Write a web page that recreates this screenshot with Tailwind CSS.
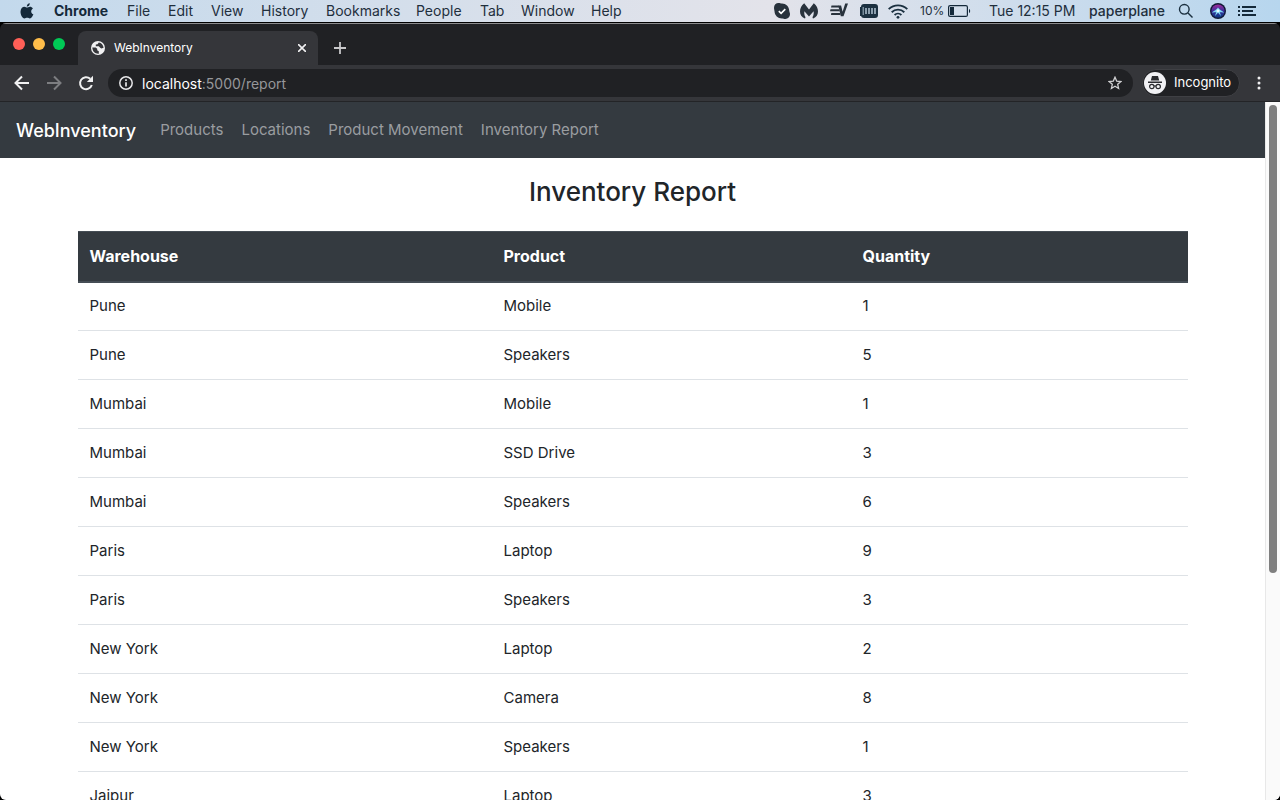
<!DOCTYPE html>
<html lang="en">
<head>
<meta charset="utf-8">
<title>WebInventory</title>
<script src="https://cdn.jsdelivr.net/npm/@tailwindcss/browser@4"></script>
</head>
<body class="h-screen flex flex-col overflow-hidden bg-black font-['Inter','Liberation_Sans',sans-serif] text-[#212529]">

<!-- System menu bar -->
<header class="h-[22px] shrink-0 flex items-center justify-between bg-linear-to-r from-[#c3d9ec] via-[#e3e3ea] via-60% to-[#b7d6ee] text-[14px] leading-[22px] text-[#1f2f3d] whitespace-nowrap">
  <nav class="flex items-center pl-5" aria-label="Menu bar">
    <button class="w-[34px]" aria-label="Apple menu">
      <svg class="w-[14px] h-4" viewBox="0 0 14 16" fill="#14293a"><path d="M9.800 0.300c.1 1.800-1.300 3.400-3 3.400C6.600 2 8.200.4 9.800.3zM7 4.600c.6 0 1.600-.8 3-.8 1.100 0 2.200.6 2.900 1.600-2.500 1.500-2.100 4.900.5 5.900-.6 1.700-2 4.200-3.500 4.200-1.100 0-1.400-.7-2.700-.7s-1.700.7-2.700.7C2.700 15.500.5 12.300.5 8.800c0-3.100 1.900-5 4-5 1.200 0 1.900.8 2.500.8z"/></svg>
    </button>
    <button class="w-[73px] text-left font-bold text-[#14293a]">Chrome</button>
    <button class="w-[41px] text-left">File</button>
    <button class="w-[43px] text-left">Edit</button>
    <button class="w-[50px] text-left">View</button>
    <button class="w-[65px] text-left">History</button>
    <button class="w-[90px] text-left">Bookmarks</button>
    <button class="w-[64px] text-left">People</button>
    <button class="w-[41px] text-left">Tab</button>
    <button class="w-[70px] text-left">Window</button>
    <button class="text-left">Help</button>
  </nav>
  <div class="flex items-center pr-6">
    <svg class="w-4 h-4 mr-[10px]" viewBox="0 0 16 16"><path fill="#28323c" d="M4.500 0C6 0 6.500.5 8 .5c4 0 7 3 7.200 7 0 1.200.8 2 .8 3.600 0 2.700-2 4.900-4.600 4.900-1.400 0-2-.6-3.400-.6-4.200 0-7.300-3-7.500-7.200C.4 7 0 6.200 0 4.700 0 2 2 0 4.500 0z"/><path d="M4.800 8.200l2.300 2.200 4.200-4.300" fill="none" stroke="#fff" stroke-width="1.600"/></svg>
    <svg class="w-[18px] h-4 mr-[12px]" viewBox="0 0 18 16"><path fill="#28323c" d="M4.200 0.300L9 6.600 13.800.3C16.600 2.400 18 5.400 18 8.600c0 3.400-1.600 5.700-4.800 7-.6-.4-.8-1-.5-1.800 1-2 1.200-3.800.9-5.600L9 13.600 4.400 8.200c-.3 1.800-.1 3.600.9 5.600.3.800.1 1.400-.5 1.800C1.600 14.300 0 12 0 8.600 0 5.400 1.400 2.400 4.200.3z"/></svg>
    <svg class="w-[18px] h-4 mr-[12px]" viewBox="0 0 18 16" fill="#28323c"><path d="M1.500 2.500h7.200l.5 2H1zM.5 6.200h8.800l.5 2H0zM1.300 10h8.600l.6 2H1z"/><path d="M8.200 2.500h2.900l1.500 6.300L15.200.5H18L13.500 13.200h-2.700z"/></svg>
    <svg class="w-[18px] h-[14px] mr-[10px]" viewBox="0 0 18 14"><rect x="1" y="0" width="17" height="14" rx="3" fill="#1b3040"/><rect x="0" y="3" width="2" height="9" fill="#1b3040"/><path d="M3.200 3v8" stroke="#c8dbe9" stroke-width=".8"/><path d="M6 4v6M9 4v6M12 4v6M15 4v6" stroke="#c8dbe9" stroke-width="1.300"/></svg>
    <svg class="w-5 h-[15px] mr-[12px]" viewBox="0 0 20 15" fill="none" stroke="#1b3040" stroke-width="1.900"><path d="M.7 5.200a13.200 13.200 0 0 1 18.600 0M3.700 8.200a9 9 0 0 1 12.600 0M6.600 11a4.900 4.900 0 0 1 6.800 0"/><circle cx="10" cy="13.300" r="1.400" fill="#1b3040" stroke="none"/></svg>
    <span class="text-[12px] w-7">10%</span>
    <svg class="w-[23px] h-3 mr-[18px]" viewBox="0 0 23 12"><rect x=".6" y=".6" width="18.800" height="10.800" rx="1.500" fill="none" stroke="#14293a" stroke-width="1.200"/><rect x="2" y="2" width="4" height="8" fill="#14293a"/><path d="M21 4c1.500.3 1.500 3.700 0 4z" fill="#14293a"/></svg>
    <span class="w-[100px]">Tue 12:15 PM</span>
    <span class="w-[89px] font-medium">paperplane</span>
    <svg class="w-4 h-4 mr-[16px]" viewBox="0 0 16 16" fill="none" stroke="#1b3040" stroke-width="1.400"><circle cx="6.300" cy="6.300" r="4.800"/><path d="M10 10l4.500 4.500"/></svg>
    <svg class="w-4 h-4 mr-[12px]" viewBox="0 0 16 16"><defs><linearGradient id="siri" x2="0" y2="1"><stop offset="0" stop-color="#a02c9c"/><stop offset=".5" stop-color="#3a2f9c"/><stop offset="1" stop-color="#0b3a86"/></linearGradient></defs><circle cx="8" cy="8" r="8" fill="#111936"/><circle cx="8" cy="8" r="6.600" fill="url(#siri)"/><path d="M8 4.500C9.500 6.500 12 8 14 9.500c-2 0-3-.3-4.200-.2L11 13 8 9.800 5 13l1.200-3.700C5 9.200 4 9.500 2 9.500 4 8 6.500 6.500 8 4.500z" fill="#7fd8f2"/><circle cx="8" cy="7.800" r="1.500" fill="#eafcff"/></svg>
    <svg class="w-[18px] h-3" viewBox="0 0 18 12" stroke="#14293a" stroke-width="1.800"><path d="M0 2h2M4 2h14M0 6h2M4 6h11M0 10h2M4 10h14"/></svg>
  </div>
</header>

<!-- Browser window -->
<div class="flex-1 min-h-0 mt-px flex flex-col rounded-[6px] overflow-hidden bg-[#202124] text-white">
  <div class="h-[42px] shrink-0 flex items-end border-t border-[#8b8b8d]">
    <div class="flex gap-2 pl-[13px] pb-[2px] w-[78px] self-center" aria-label="Window controls">
      <button class="size-3 rounded-full bg-[#ff5f57]" aria-label="Close window"></button>
      <button class="size-3 rounded-full bg-[#ffbd4a]" aria-label="Minimise window"></button>
      <button class="size-3 rounded-full bg-[#00ca56]" aria-label="Zoom window"></button>
    </div>
    <div class="w-[240px] h-[34px] rounded-t-lg bg-[#35363a] flex items-center px-3 text-[12px]">
      <svg class="w-[14px] h-[14px] ml-px mr-[9px]" viewBox="0 0 14 14"><circle cx="7" cy="7" r="7" fill="#f1f1f2"/><path d="M1.300 6.500l3.400 0 1.500 1.200v1.600l1.600 1v2.400C4 13 1.500 10.500 1.300 6.500zM7.800 1.400L6.500 3.200 4.800 3.600v1.600h3l1.400 1.500 1.200.8 2.200-.7C12.300 4 10.500 1.800 7.800 1.400z" fill="#35363a"/></svg>
      <span class="flex-1">WebInventory</span>
      <button aria-label="Close tab"><svg class="size-2" viewBox="0 0 8 8" stroke="#f1f1f2" stroke-width="1.600"><path d="M0 0l8 8M8 0L0 8"/></svg></button>
    </div>
    <button class="w-11 h-[34px] flex items-center justify-center" aria-label="New tab"><svg class="size-3" viewBox="0 0 12 12" stroke="#c8c8ca" stroke-width="1.800"><path d="M6 0v12M0 6h12"/></svg></button>
  </div>

  <div class="h-9 shrink-0 bg-[#35363a] flex items-center pl-[14px] pr-[18px]">
    <button class="w-8" aria-label="Back"><svg class="size-4" viewBox="0 0 16 16" fill="none" stroke="#f1f1f2" stroke-width="2"><path d="M15 8H2M8 1.500L1.500 8 8 14.500"/></svg></button>
    <button class="w-8" aria-label="Forward"><svg class="size-4" viewBox="0 0 16 16" fill="none" stroke="#7d7e81" stroke-width="2"><path d="M1 8h13M8 1.500L14.500 8 8 14.500"/></svg></button>
    <button class="w-[30px]" aria-label="Reload"><svg class="size-4" viewBox="0 0 16 16"><path d="M13.800 10A6 6 0 1 1 12.200 3.800" fill="none" stroke="#f1f1f2" stroke-width="2"/><path d="M15 .8V7H8.800z" fill="#f1f1f2"/></svg></button>
    <div class="flex-1 h-7 rounded-full bg-[#202124] flex items-center px-[11px] text-[14px]">
      <svg class="size-[14px] mr-[9px]" viewBox="0 0 14 14"><circle cx="7" cy="7" r="6.200" fill="none" stroke="#e8e8ea" stroke-width="1.500"/><path d="M7 6.200v4.300M7 3.200v1.700" stroke="#e8e8ea" stroke-width="1.700"/></svg>
      <div class="flex-1 outline-none" role="textbox" contenteditable="true" spellcheck="false" aria-label="Address">localhost<span class="text-[#96979a]">:5000/report</span></div>
      <button aria-label="Bookmark this page"><svg class="size-[14px] block" viewBox="0 0 14 14" fill="none" stroke="#d0d0d2" stroke-width="1.300"><path d="M7 1.200l1.700 3.900 4.200.4-3.200 2.800.9 4.200L7 10.300l-3.600 2.200.9-4.200L1.100 5.500l4.200-.4z"/></svg></button>
    </div>
    <button class="ml-[9px] h-7 w-[98px] rounded-full bg-[#202124] border border-[#3f4044] flex items-center text-[13px]">
      <svg class="size-[22px] ml-px mr-2" viewBox="0 0 22 22"><circle cx="11" cy="11" r="11" fill="#f1f1f4"/><path d="M8 4h6l1.200 4.500H6.800zM4 9.600h14v1.300H4z" fill="#2a2b2f"/><g fill="none" stroke="#2a2b2f" stroke-width="1.200"><circle cx="7.800" cy="14.500" r="2.200"/><circle cx="14.200" cy="14.500" r="2.200"/><path d="M10 14.300q1-.8 2 0"/></g></svg>
      <span>Incognito</span>
    </button>
    <button class="ml-[16px]" aria-label="Browser menu"><svg class="w-[6px] h-[14px] block" viewBox="0 0 6 14" fill="#f1f1f2"><circle cx="3" cy="2" r="1.500"/><circle cx="3" cy="7" r="1.500"/><circle cx="3" cy="12" r="1.500"/></svg></button>
  </div>

  <div class="flex-1 min-h-0 border-t border-[#232427] bg-white flex">
    <div class="flex-1 min-w-0 overflow-hidden">
      <nav class="h-14 bg-[#343a40] flex items-center px-4 text-[15px]">
        <a href="#" class="text-[18px] font-medium text-white mr-6">WebInventory</a>
        <div class="flex gap-[18px] text-[#9a9da0]">
          <a href="#">Products</a>
          <a href="#">Locations</a>
          <a href="#">Product Movement</a>
          <a href="#">Inventory Report</a>
        </div>
      </nav>
      <main class="max-w-[1110px] mx-auto text-[#212529]">
        <h1 class="pt-[18px] pb-[23px] text-center text-[26px] leading-8 font-medium">Inventory Report</h1>
        <table class="w-full table-fixed text-left text-[15px] leading-6">
          <colgroup><col class="w-[414px]"><col class="w-[359px]"><col></colgroup>
          <thead class="bg-[#343a40] text-white text-[16px]">
            <tr class="h-[50px] border-t border-b-2 border-[#454d55]"><th class="px-3 font-bold">Warehouse</th><th class="px-3 font-bold">Product</th><th class="px-3 font-bold">Quantity</th></tr>
          </thead>
          <tbody class="divide-y divide-[#dee2e6]">
            <tr class="h-[49px]"><td class="px-3">Pune</td><td class="px-3">Mobile</td><td class="px-3">1</td></tr>
            <tr class="h-[49px]"><td class="px-3">Pune</td><td class="px-3">Speakers</td><td class="px-3">5</td></tr>
            <tr class="h-[49px]"><td class="px-3">Mumbai</td><td class="px-3">Mobile</td><td class="px-3">1</td></tr>
            <tr class="h-[49px]"><td class="px-3">Mumbai</td><td class="px-3">SSD Drive</td><td class="px-3">3</td></tr>
            <tr class="h-[49px]"><td class="px-3">Mumbai</td><td class="px-3">Speakers</td><td class="px-3">6</td></tr>
            <tr class="h-[49px]"><td class="px-3">Paris</td><td class="px-3">Laptop</td><td class="px-3">9</td></tr>
            <tr class="h-[49px]"><td class="px-3">Paris</td><td class="px-3">Speakers</td><td class="px-3">3</td></tr>
            <tr class="h-[49px]"><td class="px-3">New York</td><td class="px-3">Laptop</td><td class="px-3">2</td></tr>
            <tr class="h-[49px]"><td class="px-3">New York</td><td class="px-3">Camera</td><td class="px-3">8</td></tr>
            <tr class="h-[49px]"><td class="px-3">New York</td><td class="px-3">Speakers</td><td class="px-3">1</td></tr>
            <tr class="h-[49px]"><td class="px-3">Jaipur</td><td class="px-3">Laptop</td><td class="px-3">3</td></tr>
          </tbody>
        </table>
      </main>
    </div>
    <div class="w-[15px] bg-[#fafafa] border-l border-[#e8e8e8] flex justify-center" aria-hidden="true">
      <div class="mt-[3px] w-2 h-[67%] rounded-full bg-[#7f7f7f]"></div>
    </div>
  </div>
</div>
</body>
</html>
